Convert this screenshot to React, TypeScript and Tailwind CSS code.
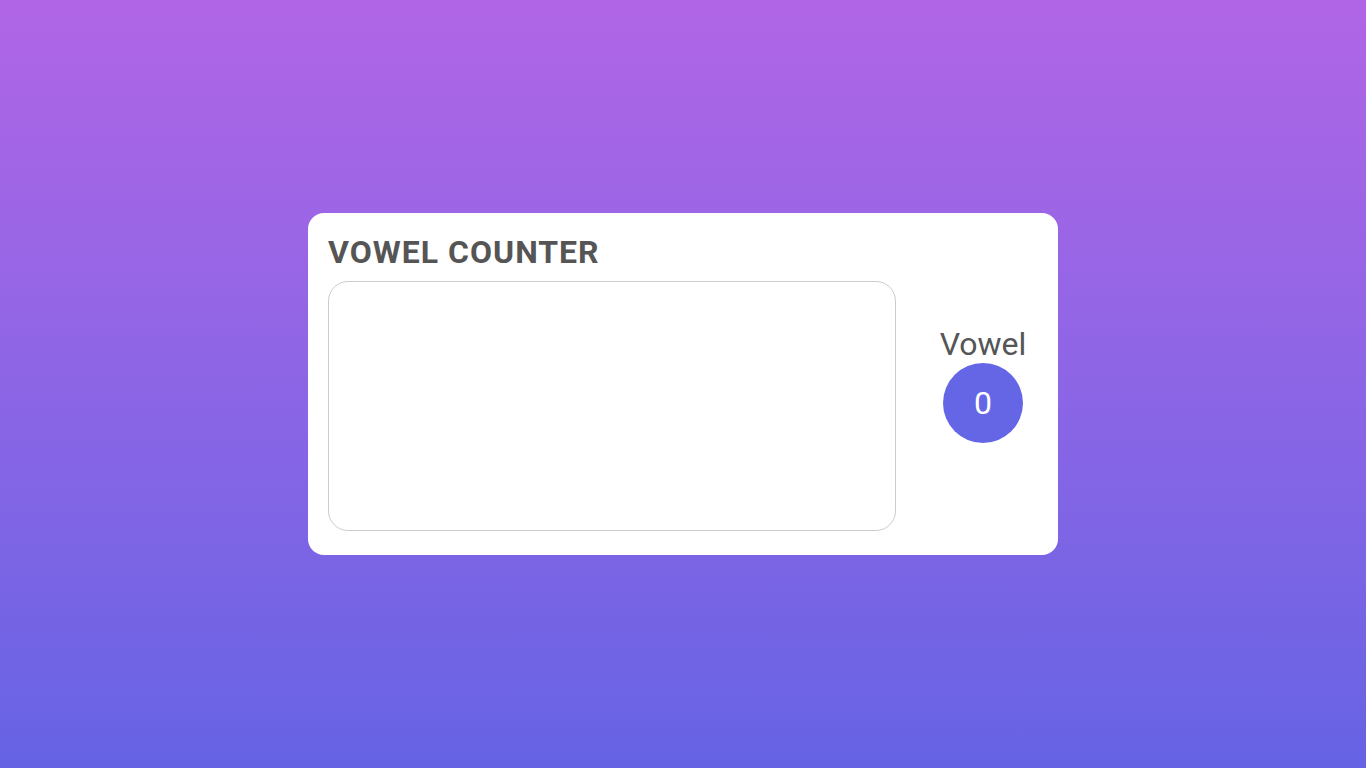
export default function App() {
  return (
    <main
      className="flex min-h-screen w-full items-center justify-center bg-gradient-to-b from-[#b065e6] to-[#6563e4]"
      style={{ fontFamily: "Roboto, 'Liberation Sans', sans-serif" }}
    >
      <section className="flex w-[750px] items-center rounded-2xl bg-white px-5 pb-6 pt-5">
        <div className="flex flex-col">
          <h1 className="mb-[10px] text-[32px] font-bold leading-[38px] tracking-[1px] text-[#555]">VOWEL COUNTER</h1>
          <textarea className="h-[250px] w-[568px] resize-none rounded-[20px] border border-[#ccc] p-3 outline-none" />
        </div>
        <div className="flex flex-1 flex-col items-center pl-8 pt-1">
          <p className="text-[32px] leading-[38px] text-[#555]">Vowel</p>
          <div className="flex h-20 w-20 items-center justify-center rounded-full bg-[#6466e6] text-[32px] text-white">
            0
          </div>
        </div>
      </section>
    </main>
  );
}
